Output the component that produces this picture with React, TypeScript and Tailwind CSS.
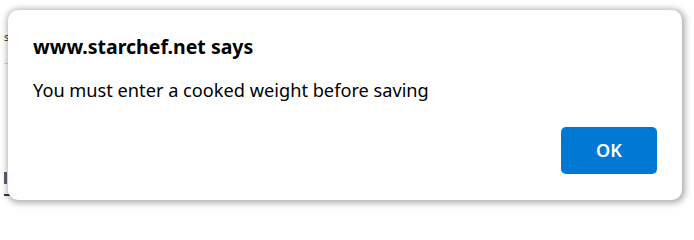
import React from "react";

// Browser alert() dialog sitting over a mostly hidden page.
export default function App() {
  return (
    <div className="relative h-[210px] w-[694px] overflow-hidden bg-white font-['Noto_Sans','Open_Sans',sans-serif]">
      {/* bits of the page behind the dialog */}
      <div className="flex h-full flex-col pl-[4px] pt-[30px]">
        <span className="text-[11px] leading-[14px] text-[#333]">s</span>
        <div className="mt-[19px] h-px w-[10px] bg-[#d8d8d8]" />
        <div className="mt-[108px] h-[12px] w-[3px] bg-[#5a6478]" />
        <div className="mt-[10px] h-[2px] w-[10px] bg-[#2e3a55]" />
      </div>

      {/* alert dialog */}
      <div className="absolute left-[8px] top-[10px] flex h-[190px] w-[674px] flex-col rounded-[10px] bg-white px-[25px] shadow-[1px_1px_6px_2px_rgba(0,0,0,0.32)]">
        <h1 className="mt-[23px] text-[19.5px] font-bold leading-[28px] text-black">
          www.starchef.net says
        </h1>
        <p className="mt-[17px] text-[18.2px] leading-[24px] text-black">
          You must enter a cooked weight before saving
        </p>
        <div className="mt-auto mb-[26px] flex justify-end">
          <button
            type="button"
            className="h-[47px] w-[96px] rounded-[5px] bg-[#0078d4] text-[18px] font-semibold text-white"
          >
            OK
          </button>
        </div>
      </div>
    </div>
  );
}
